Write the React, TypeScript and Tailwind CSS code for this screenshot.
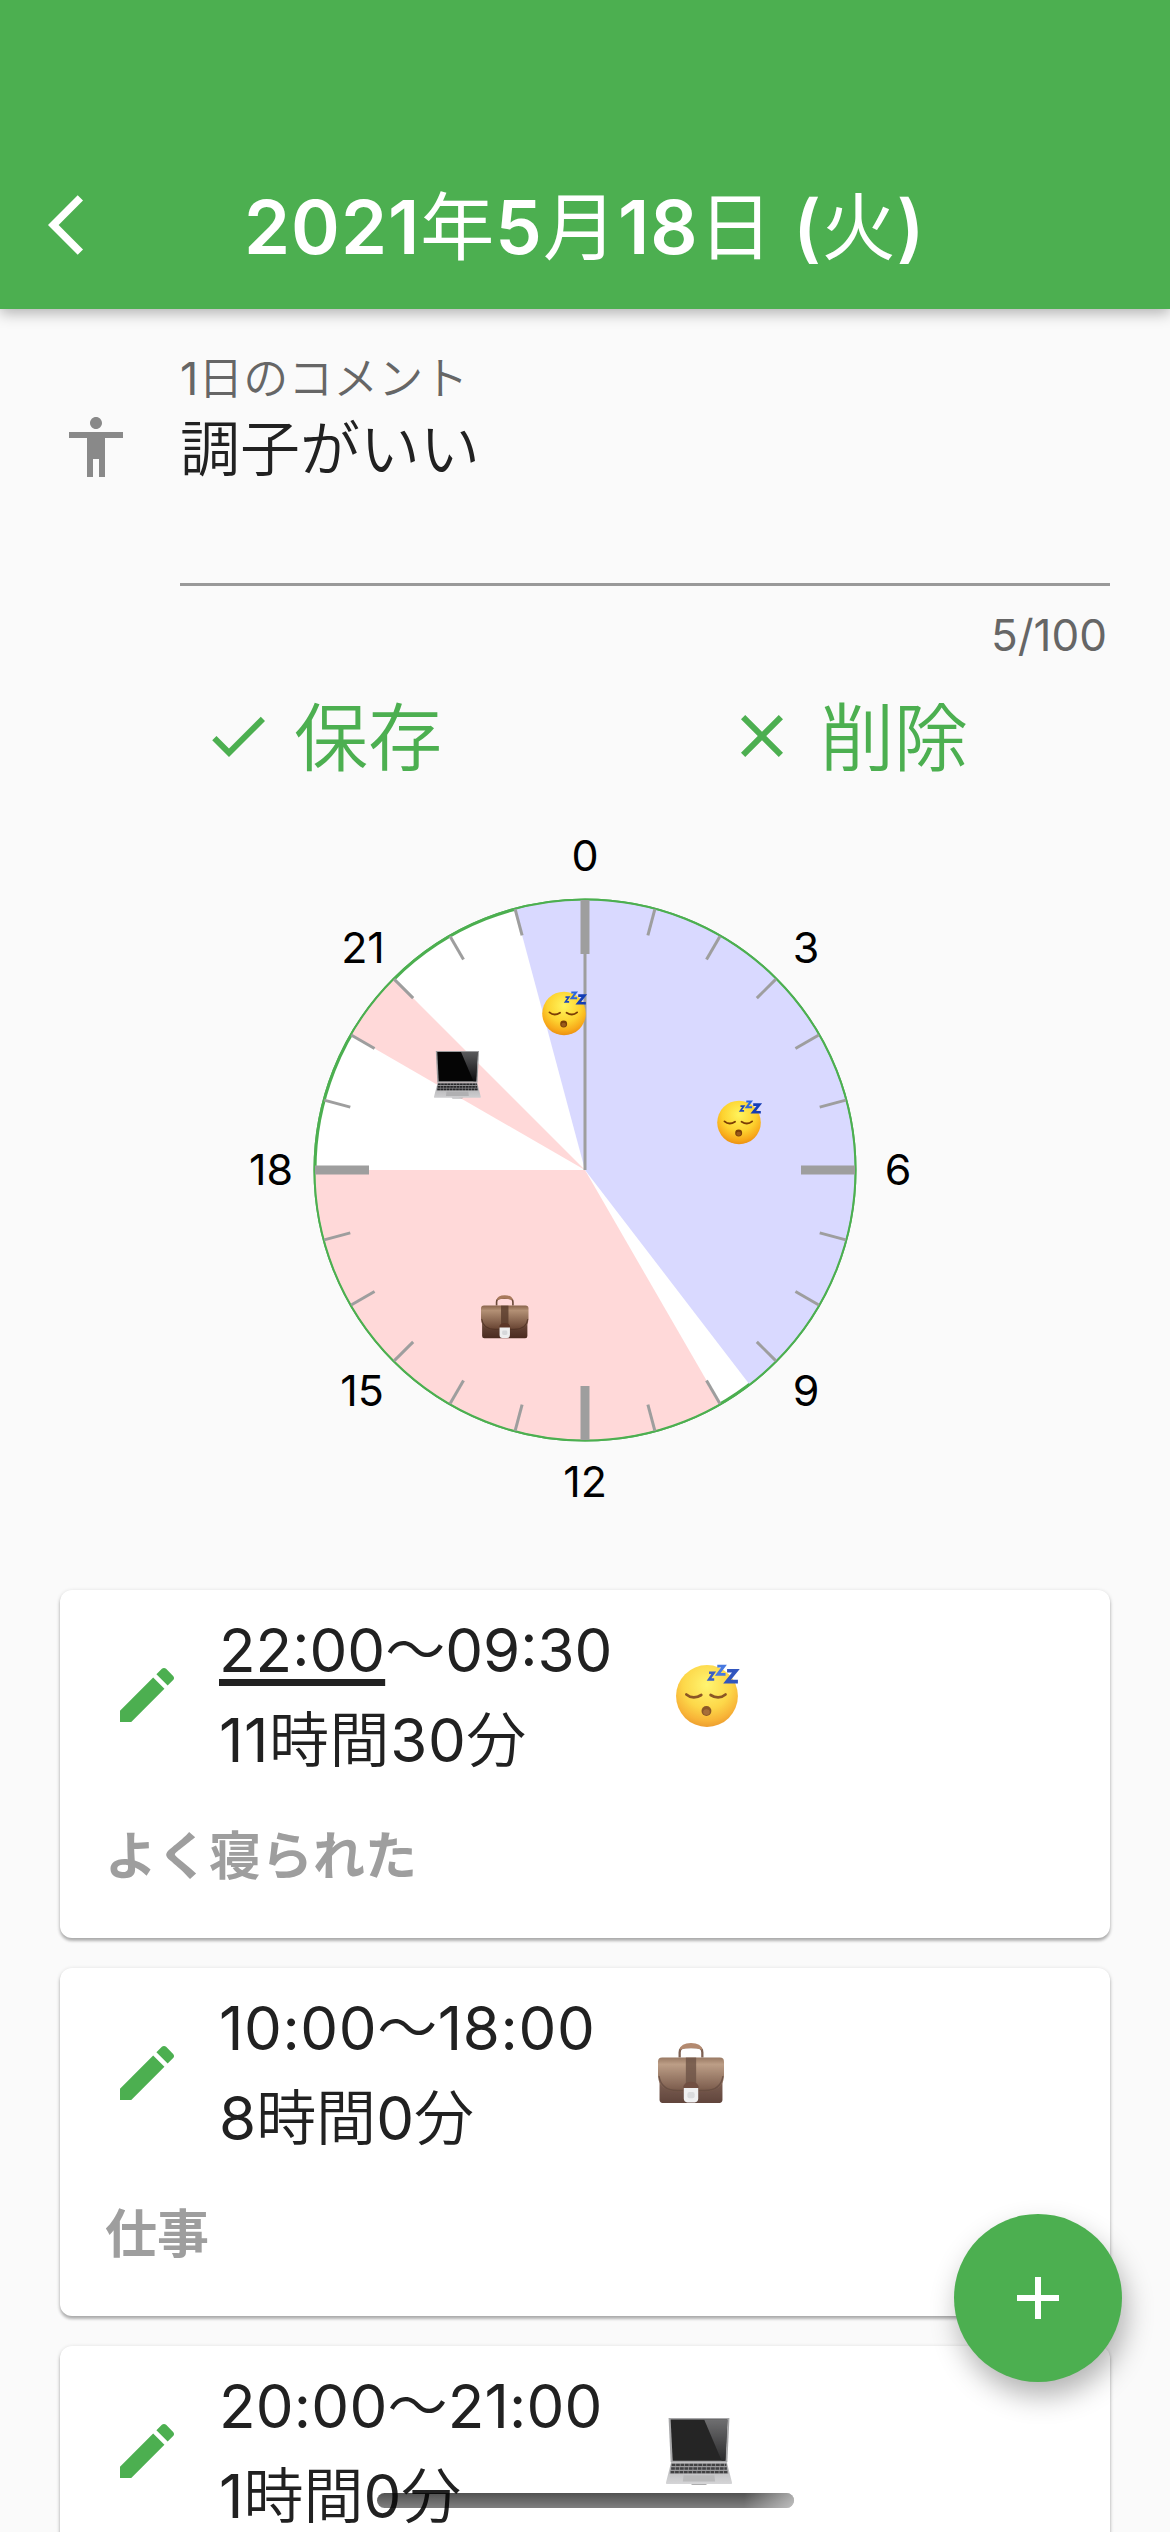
import type { ReactNode } from 'react';

type Kind = 'sleep' | 'case' | 'laptop';

/* Japanese runs use their own face and weight beside the Latin digits. */
function Ja({ children, className = 'font-[350]' }: { children: ReactNode; className?: string }) {
  return <span className={`inline-block font-['Noto_Sans_CJK_JP',sans-serif] ${className}`}>{children}</span>;
}

function Glyph({ d, className }: { d: string; className: string }) {
  return (
    <svg viewBox="0 0 24 24" className={className} fill="currentColor">
      <path d={d} />
    </svg>
  );
}

const ICON = {
  back: 'M11.67 3.87L9.9 2.1 0 12l9.9 9.9 1.77-1.77L3.54 12z',
  person: 'M12 2c1.1 0 2 .9 2 2s-.9 2-2 2-2-.9-2-2 .9-2 2-2zm9 7h-6v13h-2v-6h-2v6H9V9H3V7h18v2z',
  check: 'M9 16.17L4.83 12l-1.42 1.41L9 19 21 7l-1.41-1.41z',
  close: 'M19 6.41L17.59 5 12 10.59 6.41 5 5 6.41 10.59 12 5 17.59 6.41 19 12 13.41 17.59 19 19 17.59 13.41 12z',
  edit: 'M3 17.25V21h3.75L17.81 9.94l-3.75-3.75L3 17.25zM20.71 7.04c.39-.39.39-1.02 0-1.41l-2.34-2.34c-.39-.39-1.02-.39-1.41 0l-1.83 1.83 3.75 3.75 1.83-1.83z',
  add: 'M19 13h-6v6h-2v-6H5v-2h6V5h2v6h6v2z',
};

/* Drawn on a 64-unit square. */
function Pictogram({ kind }: { kind: Kind }) {
  if (kind === 'sleep') {
    return (
      <g>
        <circle cx="31" cy="33" r="30" fill="url(#face)" />
        <path d="M11 31.5q6.5 5.5 14.5 .5M34.5 32q8 5 14.5-.5" fill="none" stroke="#7a3d05" strokeWidth="2.6" strokeLinecap="round" />
        <circle cx="30.5" cy="47.5" r="4.8" fill="#7a3f08" />
        <ellipse cx="30.5" cy="48.5" rx="3.2" ry="2.8" fill="#9a5a1c" />
        <path d="M33 10.5h4.5l-4.5 6.5h5" fill="none" stroke="#1d48bd" strokeWidth="2.4" />
        <path d="M41 4h6.5l-6 8h7.5" fill="none" stroke="#2e66dc" strokeWidth="2.8" />
        <path d="M50.5 8.5h8.5l-8.5 10.5h10.5" fill="none" stroke="#143db5" strokeWidth="3.6" />
      </g>
    );
  }
  if (kind === 'case') {
    return (
      <g>
        <path d="M21 17v-5q0-5 6-5h10q6 0 6 5v5" fill="none" stroke="#6b4a3a" strokeWidth="2.2" />
        <path d="M21 9.5q1-6.500 11-6.500t11 6.500q-11-3.500-22 0z" fill="#a8795b" />
        <rect x="1.5" y="18" width="61" height="43" rx="3" fill="url(#leather)" />
        <path d="M0 21q0-4 4-4h56q4 0 4 4v14q-1 15-19 15H19Q1 50 0 35z" fill="url(#flap)" />
        <path d="M1 35q2 14 18 14h26q16 0 18-14" fill="none" stroke="#4a2d22" strokeWidth="1.4" opacity="0.7" />
        <path d="M27 17h10v25H27z" fill="#583a2b" opacity="0.8" />
        <path d="M24.500 47q0-6.500 7.500-6.500t7.500 6.500v3h-15z" fill="#5c3627" />
        <path d="M25 46.500h14v10q0 4-3.500 4h-7q-3.500 0-3.500-4z" fill="#eeeeef" />
        <rect x="28.500" y="50.500" width="7" height="6" rx="2" fill="#d6d7da" />
      </g>
    );
  }
  return (
    <g>
      <path d="M2.5 0h59l-2 43H4.5z" fill="#9b9b9d" />
      <path d="M4.5 1.500h55l-2 40h-51z" fill="#050505" />
      <path d="M37 1.500h22.500l-1.800 40H54z" fill="url(#glare)" />
      <path d="M5 43h54l5 19.500q.5 1.500-1 1.500H1q-1.500 0-1-1.500z" fill="url(#metal)" />
      <path d="M5.200 44.200h53.600L60.500 54h-57z" fill="#8e8e90" />
      <path d="M5.500 45.500h53M5 49h54M4.500 52.500h55" stroke="#252527" strokeWidth="2.300" strokeDasharray="3.600 .7" />
      <path d="M17 55.500h30l.6 6H16.400z" fill="#b0b0b2" />
      <path d="M24 64h16l-1.500 1h-13z" fill="#a0a0a2" />
    </g>
  );
}

function Emoji({ kind }: { kind: Kind }) {
  return (
    <svg viewBox="0 0 64 64" className="h-[66px] w-[66px] overflow-visible opacity-87">
      <Pictogram kind={kind} />
    </svg>
  );
}

function Gradients() {
  return (
    <svg className="absolute h-0 w-0">
      <defs>
        <radialGradient id="face" cx="0.5" cy="0.32" r="0.7">
          <stop offset="0" stopColor="#fff45c" />
          <stop offset="0.55" stopColor="#fdd22f" />
          <stop offset="0.82" stopColor="#f8ab1b" />
          <stop offset="1" stopColor="#e98c10" />
        </radialGradient>
        <linearGradient id="leather" x1="0" y1="0" x2="0" y2="1">
          <stop offset="0" stopColor="#8d6a57" />
          <stop offset="1" stopColor="#4a2a20" />
        </linearGradient>
        <linearGradient id="flap" x1="0" y1="0" x2="0" y2="1">
          <stop offset="0" stopColor="#8a654c" />
          <stop offset="0.2" stopColor="#b39075" />
          <stop offset="1" stopColor="#64402f" />
        </linearGradient>
        <linearGradient id="glare" x1="0" y1="0" x2="0" y2="1">
          <stop offset="0" stopColor="#5a5a5c" />
          <stop offset="1" stopColor="#0c0c0e" />
        </linearGradient>
        <linearGradient id="metal" x1="0" y1="0" x2="0" y2="1">
          <stop offset="0" stopColor="#a9a9ab" />
          <stop offset="1" stopColor="#cfcfd1" />
        </linearGradient>
      </defs>
    </svg>
  );
}

const C = { x: 345, y: 350, r: 270 };

function at(hour: number, radius: number): [number, number] {
  const a = (hour / 24) * Math.PI * 2;
  return [C.x + Math.sin(a) * radius, C.y - Math.cos(a) * radius];
}

function slice(from: number, to: number) {
  const [x1, y1] = at(from, C.r);
  const [x2, y2] = at(to, C.r);
  return `M${C.x} ${C.y}L${x1} ${y1}A${C.r} ${C.r} 0 ${to - from > 12 ? 1 : 0} 1 ${x2} ${y2}z`;
}

const SLICES = [
  { from: 23, to: 24, color: '#d9d9ff' },
  { from: 0, to: 9.5, color: '#d9d9ff' },
  { from: 10, to: 18, color: '#ffd9d9' },
  { from: 20, to: 21, color: '#ffd9d9' },
];

const LABELS: [string, number, number][] = [
  ['0', 345, 36], ['3', 566, 128], ['6', 658, 350], ['9', 566, 571],
  ['12', 345, 662], ['15', 122, 571], ['18', 31, 350], ['21', 123, 128],
];

const MARKS: { kind: Kind; x: number; y: number; s: number }[] = [
  { kind: 'sleep', x: 301.5, y: 169.5, s: 46.5 },
  { kind: 'sleep', x: 476.5, y: 278.5, s: 46.5 },
  { kind: 'case', x: 241, y: 473, s: 47.5 },
  { kind: 'laptop', x: 194, y: 231, s: 46.8 },
];

function DayClock() {
  return (
    <svg viewBox="0 0 690 700" className="h-[700px] w-[690px]">
      <circle cx={C.x} cy={C.y} r={C.r} fill="#fff" stroke="#4caf50" strokeWidth="3" />
      {SLICES.map((s) => (
        <path key={s.from} d={slice(s.from, s.to)} fill={s.color} />
      ))}
      <circle cx={C.x} cy={C.y} r="270.500" fill="none" stroke="#4caf50" strokeWidth="2" />
      <path d={`M${C.x} ${C.y}V80`} stroke="#9e9e9e" strokeWidth="3" />
      {Array.from({ length: 24 }, (_, h) => {
        const major = h % 6 === 0;
        const [x1, y1] = at(h, C.r);
        const [x2, y2] = at(h, major ? 216 : 243);
        return <line key={h} x1={x1} y1={y1} x2={x2} y2={y2} stroke="#9e9e9e" strokeWidth={major ? 9 : 3} />;
      })}
      {LABELS.map(([t, x, y]) => (
        <text key={t} x={x} y={y + 15} textAnchor="middle" className="fill-black font-['Inter',sans-serif] text-[43px]">
          {t}
        </text>
      ))}
      {MARKS.map((m, i) => (
        <svg key={i} x={m.x} y={m.y} width={m.s} height={m.s} viewBox="0 0 64 64" className="overflow-visible">
          <Pictogram kind={m.kind} />
        </svg>
      ))}
    </svg>
  );
}

function Entry({ time, total, note, kind }: { time: ReactNode; total: ReactNode; note: string; kind: Kind }) {
  return (
    <article className="h-[348px] shrink-0 rounded-xl bg-white pl-[51px] shadow-[0_3px_3px_rgba(0,0,0,0.24),0_1px_4px_rgba(0,0,0,0.16)]">
      <div className="flex h-[210px] items-center">
        <Glyph d={ICON.edit} className="h-[72px] w-[72px] text-[#4caf50]" />
        <div className="-mt-[9px] ml-9 text-[60px] leading-[90px] whitespace-nowrap text-[#212121]">
          <div className="h-[90px]">{time}</div>
          <div className="h-[90px]">{total}</div>
        </div>
        <div className="ml-[63px]">
          <Emoji kind={kind} />
        </div>
      </div>
      <p className="-ml-[6px] pt-[15px] font-['Noto_Sans_CJK_JP',sans-serif] text-[52px] leading-[76px] font-bold text-[#9e9e9e]">{note}</p>
    </article>
  );
}

export default function App() {
  return (
    <div className="relative flex h-[2532px] w-[1170px] flex-col overflow-hidden bg-[#fafafa] font-['Inter','Noto_Sans_CJK_JP',sans-serif]">
      <Gradients />
      <header className="relative z-10 flex h-[309px] shrink-0 items-end bg-[#4caf50] pl-12 text-white shadow-[0_4px_14px_rgba(0,0,0,0.3)]">
        <div className="flex h-[168px] w-full items-center">
          <Glyph d={ICON.back} className="h-[72px] w-[72px]" />
          <h1 className="-mt-[2px] ml-[124px] text-[74px] leading-none font-[580] tracking-[1px] whitespace-nowrap">
            2021<Ja className="font-normal">年</Ja>5<Ja className="font-normal">月</Ja>18<Ja className="font-normal">日</Ja> (<Ja className="font-normal">火</Ja>)
          </h1>
        </div>
      </header>

      <section className="flex h-[391px] shrink-0 px-[60px]">
        <Glyph d={ICON.person} className="mt-[102px] h-[72px] w-[72px] text-[#898989]" />
        <div className="ml-12 flex-1">
          <div className="mt-[34px] h-[64px] text-[45px] leading-[66px] text-[#666]">
            1<Ja>日のコメント</Ja>
          </div>
          <div className="h-[179px] border-b-[3px] border-[#999] text-[60px] leading-[76px] text-[#212121]">
            <Ja>調子がいい</Ja>
          </div>
          <div className="pt-[21px] pr-[3px] text-right text-[44px] leading-[56px] text-[#666]">5/100</div>
        </div>
      </section>

      <div className="flex h-[72px] shrink-0 items-center text-[74px] text-[#4caf50]">
        <button className="ml-[202px] flex w-[524px] items-center gap-5">
          <Glyph d={ICON.check} className="h-[72px] w-[72px]" />
          <Ja className="-mt-[7px] font-[350]">保存</Ja>
        </button>
        <button className="flex items-center gap-[22px]">
          <Glyph d={ICON.close} className="h-[72px] w-[72px]" />
          <Ja className="-mt-[7px] font-[350]">削除</Ja>
        </button>
      </div>

      <div className="mt-12 flex h-[770px] shrink-0 justify-center">
        <DayClock />
      </div>

      <main className="flex flex-col gap-[30px] px-[60px]">
        <Entry
          kind="sleep"
          note="よく寝られた"
          time={<><span className="underline decoration-[7px] underline-offset-[7px]">22:00</span><Ja>〜</Ja>09:30</>}
          total={<span className="tracking-[0.6px]">11<Ja>時間</Ja>30<Ja>分</Ja></span>}
        />
        <Entry
          kind="case"
          note="仕事"
          time={<span className="tracking-[0.6px]">10:00<Ja>〜</Ja>18:00</span>}
          total={<>8<Ja>時間</Ja>0<Ja>分</Ja></>}
        />
        <Entry
          kind="laptop"
          note=""
          time={<span className="tracking-[0.2px]">20:00<Ja>〜</Ja>21:00</span>}
          total={<>1<Ja>時間</Ja>0<Ja>分</Ja></>}
        />
      </main>

      <button className="absolute right-12 bottom-[150px] flex h-[168px] w-[168px] items-center justify-center rounded-full bg-[#4caf50] text-white shadow-[4px_14px_28px_rgba(0,0,0,0.3)]">
        <Glyph d={ICON.add} className="h-[72px] w-[72px]" />
      </button>
      <div className="absolute bottom-6 left-[377px] h-[15px] w-[417px] overflow-hidden rounded-full bg-linear-to-b from-black/68 to-black/50">
        <div className="ml-auto h-full w-[50px] bg-linear-to-r from-transparent to-white/50" />
      </div>
    </div>
  );
}
